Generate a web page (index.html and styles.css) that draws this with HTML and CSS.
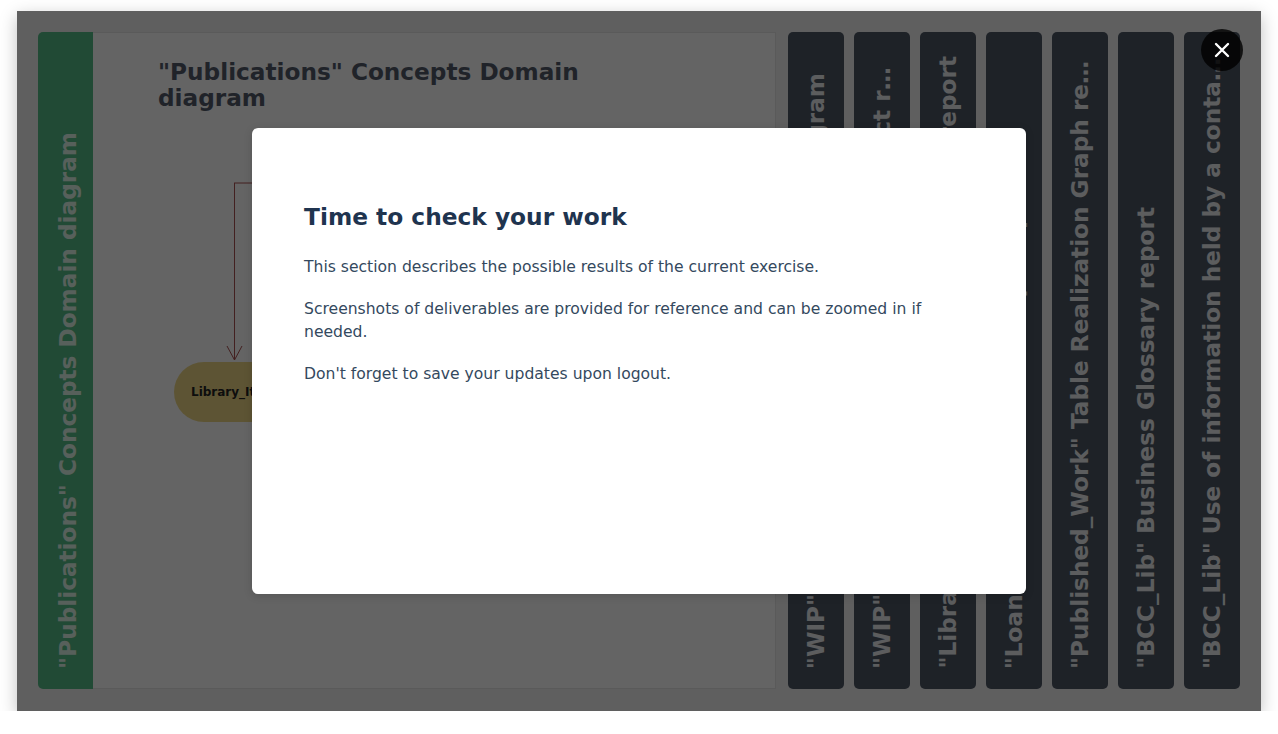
FILE: index.html
```html
<!DOCTYPE html>
<html lang="en">
<head>
<meta charset="utf-8">
<title>Time to check your work</title>
<link rel="stylesheet" href="styles.css">
</head>
<body>
<div class="frame">
  <div class="active">
    <div class="tab tab-green"><span class="tab-label">"Publications" Concepts Domain diagram</span></div>
    <div class="panel">
      <h2 class="panel-title">"Publications" Concepts Domain diagram</h2>
      <svg class="diagram" width="560" height="300" viewBox="0 0 560 300">
        <path d="M76 13 H420" stroke="#a85050" stroke-width="1" fill="none"/>
        <path d="M76.5 13 V190" stroke="#a85050" stroke-width="1" fill="none"/>
        <path d="M69 176 L76.5 190 L84 176" stroke="#a85050" stroke-width="1" fill="none"/>
        <rect x="16" y="192" width="170" height="60" rx="30" ry="30" fill="#e9d382"/>
        <text x="33" y="226" class="node-text">Library_Item</text>
      </svg>
    </div>
  </div>
  <div class="tab tab-dark"><span class="tab-label">"WIP" Publications Concepts Domain diagram</span></div>
  <div class="tab tab-dark"><span class="tab-label">"WIP" Publications Concepts Usage Impact report</span></div>
  <div class="tab tab-dark"><span class="tab-label">"Library_Item" Concepts Domain Impact report</span></div>
  <div class="tab tab-dark"><span class="tab-label">"Loan" Table Realization Graph report</span></div>
  <div class="tab tab-dark"><span class="tab-label">"Published_Work" Table Realization Graph report</span></div>
  <div class="tab tab-dark"><span class="tab-label">"BCC_Lib" Business Glossary report</span></div>
  <div class="tab tab-dark"><span class="tab-label">"BCC_Lib" Use of information held by a container report</span></div>

  <div class="overlay">
    <div class="modal">
      <h1 class="modal-title">Time to check your work</h1>
      <p class="modal-text">This section describes the possible results of the current exercise.</p>
      <p class="modal-text">Screenshots of deliverables are provided for reference and can be zoomed in if needed.</p>
      <p class="modal-text">Don't forget to save your updates upon logout.</p>
    </div>
    <button class="close" aria-label="Close">
      <svg width="16" height="16" viewBox="0 0 16 16"><path d="M2 2 L14 14 M14 2 L2 14" stroke="#ffffff" stroke-width="2.4" stroke-linecap="round"/></svg>
    </button>
  </div>
</div>
</body>
</html>
```

FILE: styles.css
```css
html, body {
  margin: 0;
  padding: 0;
  background: #ffffff;
  font-family: "DejaVu Sans", Verdana, sans-serif;
}

.frame {
  position: relative;
  box-sizing: border-box;
  width: 1244px;
  height: 700px;
  margin: 11px 0 0 17px;
  padding: 21px 21px 22px 21px;
  background: #eeeeee;
  display: flex;
  gap: 10px;
  box-shadow: 0 5px 16px rgba(0, 0, 0, 0.25);
}

.active {
  flex: 1;
  display: flex;
  min-width: 0;
}

.tab {
  box-sizing: border-box;
  flex: 0 0 56px;
  display: flex;
  flex-direction: column;
  justify-content: flex-end;
  align-items: center;
  padding: 20px 0;
  border-radius: 5px;
}

.tab-green {
  flex-basis: 55px;
  background: #54b886;
  border-radius: 5px 0 0 5px;
  color: rgba(255, 255, 255, 0.8);
  padding-left: 4px;
}

.tab-dark {
  background: #4b5563;
  color: #e6e8ec;
}

.tab-label {
  writing-mode: vertical-rl;
  transform: rotate(180deg);
  white-space: nowrap;
  overflow: hidden;
  text-overflow: ellipsis;
  min-height: 0;
  max-height: 100%;
  font-size: 23.2px;
  font-weight: bold;
  line-height: 1.2;
}

.panel {
  flex: 1;
  box-sizing: border-box;
  background: #f9f9f9;
  border: 1px solid #e2e2e2;
  border-left: none;
  padding: 26px 0 0 65px;
  margin-right: 2px;
}

.panel-title {
  margin: 0;
  width: 460px;
  font-size: 23.2px;
  line-height: 26px;
  font-weight: bold;
  color: #505868;
}

.diagram {
  display: block;
  margin-top: 59px;
}

.node-text {
  font-family: "DejaVu Sans", Verdana, sans-serif;
  font-size: 12px;
  font-weight: bold;
  fill: #222222;
}

.overlay {
  position: absolute;
  inset: 0;
  background: rgba(0, 0, 0, 0.6);
  display: flex;
  align-items: center;
  justify-content: center;
}

.modal {
  box-sizing: border-box;
  width: 774px;
  height: 466px;
  background: #ffffff;
  border-radius: 6px;
  padding: 75px 52px 40px 52px;
  box-shadow: 0 2px 8px rgba(0, 0, 0, 0.15);
}

.modal-title {
  margin: 0 0 25px 0;
  font-size: 23.3px;
  line-height: 28px;
  font-weight: bold;
  color: #1f344f;
}

.modal-text {
  margin: 0 0 19px 0;
  font-size: 15.6px;
  line-height: 23px;
  color: #34495e;
}

.close {
  position: absolute;
  top: 18px;
  right: 18px;
  width: 42px;
  height: 42px;
  border: none;
  border-radius: 50%;
  background: rgba(0, 0, 0, 0.8);
  display: flex;
  align-items: center;
  justify-content: center;
  padding: 0;
  cursor: pointer;
}
```
